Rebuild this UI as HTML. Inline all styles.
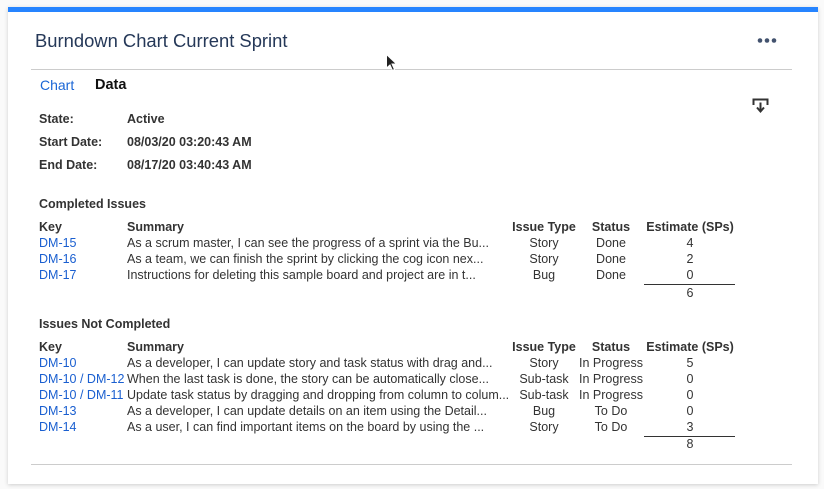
<!DOCTYPE html>
<html><head><meta charset="utf-8"><style>
*{margin:0;padding:0;box-sizing:border-box}
body{width:824px;height:489px;background:#fafafa;position:relative;overflow:hidden;font-family:"Liberation Sans",Arial,sans-serif;color:#333}
.card{position:absolute;left:8px;top:7px;width:810px;height:477px;background:#fff;box-shadow:0 1px 4px rgba(0,0,0,.18)}
.bar{position:absolute;left:8px;top:7px;width:810px;height:5px;background:#2684ff}
.a{position:absolute;white-space:nowrap;font-size:12.5px;line-height:14px}
.b{font-weight:bold}
.l{color:#1a5fd0}
.c{text-align:center}
.hr{position:absolute;height:1px;background:#ccc}
</style></head><body>
<div class="card"></div>
<div class="bar"></div>
<div class="a" style="left:35px;top:30px;font-size:18.4px;line-height:22px;color:#253858">Burndown Chart Current Sprint</div>
<svg style="position:absolute;left:757px;top:37px" width="20" height="7"><circle cx="3" cy="3.5" r="2.3" fill="#42526e"/><circle cx="10" cy="3.5" r="2.3" fill="#42526e"/><circle cx="17" cy="3.5" r="2.3" fill="#42526e"/></svg>
<div class="hr" style="left:31px;top:69px;width:761px"></div>
<svg style="position:absolute;left:385px;top:53px" width="14" height="20"><path d="M1.5 1.5 L1.5 15 L5 12 L7.5 17.5 L9.5 16.5 L7 11 L11.5 11 Z" fill="#222" stroke="#fff" stroke-width="1"/></svg>
<div class="a" style="left:40px;top:77px;font-size:14px;line-height:17px;color:#1a66d6">Chart</div>
<div class="a b" style="left:95px;top:77px;font-size:14.5px;line-height:17px;color:#111">Data</div>
<svg style="position:absolute;left:752px;top:98px" width="17" height="17"><path d="M1.5 7 V1.5 H15.5 V7" fill="none" stroke="#333" stroke-width="2"/><path d="M8.5 4.5 V13" stroke="#333" stroke-width="2"/><path d="M5 9.5 L8.5 13.5 L12 9.5" fill="none" stroke="#333" stroke-width="2"/></svg>

<div class="a b" style="left:39px;top:112px">State:</div><div class="a b" style="left:127px;top:112px">Active</div>
<div class="a b" style="left:39px;top:135px">Start Date:</div><div class="a b" style="left:127px;top:135px">08/03/20 03:20:43 AM</div>
<div class="a b" style="left:39px;top:158px">End Date:</div><div class="a b" style="left:127px;top:158px">08/17/20 03:40:43 AM</div>

<div class="a b" style="left:39px;top:197px">Completed Issues</div>
<div class="a b" style="left:39px;top:220px">Key</div><div class="a b" style="left:127px;top:220px">Summary</div>
<div class="a b c" style="left:504px;width:80px;top:220px">Issue Type</div><div class="a b c" style="left:586px;width:50px;top:220px">Status</div><div class="a b c" style="left:640px;width:100px;top:220px">Estimate (SPs)</div>

<div class="a l" style="left:39px;top:236px">DM-15</div><div class="a" style="left:127px;top:236px">As a scrum master, I can see the progress of a sprint via the Bu...</div><div class="a c" style="left:504px;width:80px;top:236px">Story</div><div class="a c" style="left:576px;width:70px;top:236px">Done</div><div class="a c" style="left:640px;width:100px;top:236px">4</div>
<div class="a l" style="left:39px;top:252px">DM-16</div><div class="a" style="left:127px;top:252px">As a team, we can finish the sprint by clicking the cog icon nex...</div><div class="a c" style="left:504px;width:80px;top:252px">Story</div><div class="a c" style="left:576px;width:70px;top:252px">Done</div><div class="a c" style="left:640px;width:100px;top:252px">2</div>
<div class="a l" style="left:39px;top:268px">DM-17</div><div class="a" style="left:127px;top:268px">Instructions for deleting this sample board and project are in t...</div><div class="a c" style="left:504px;width:80px;top:268px">Bug</div><div class="a c" style="left:576px;width:70px;top:268px">Done</div><div class="a c" style="left:640px;width:100px;top:268px">0</div>
<div class="hr" style="left:644px;top:284px;width:91px;background:#333"></div>
<div class="a c" style="left:640px;width:100px;top:286px">6</div>

<div class="a b" style="left:39px;top:317px">Issues Not Completed</div>
<div class="a b" style="left:39px;top:340px">Key</div><div class="a b" style="left:127px;top:340px">Summary</div>
<div class="a b c" style="left:504px;width:80px;top:340px">Issue Type</div><div class="a b c" style="left:586px;width:50px;top:340px">Status</div><div class="a b c" style="left:640px;width:100px;top:340px">Estimate (SPs)</div>

<div class="a l" style="left:39px;top:356px">DM-10</div><div class="a" style="left:127px;top:356px">As a developer, I can update story and task status with drag and...</div><div class="a c" style="left:504px;width:80px;top:356px">Story</div><div class="a c" style="left:576px;width:70px;top:356px">In Progress</div><div class="a c" style="left:640px;width:100px;top:356px">5</div>
<div class="a l" style="left:39px;top:372px">DM-10 / DM-12</div><div class="a" style="left:127px;top:372px">When the last task is done, the story can be automatically close...</div><div class="a c" style="left:504px;width:80px;top:372px">Sub-task</div><div class="a c" style="left:576px;width:70px;top:372px">In Progress</div><div class="a c" style="left:640px;width:100px;top:372px">0</div>
<div class="a l" style="left:39px;top:388px">DM-10 / DM-11</div><div class="a" style="left:127px;top:388px">Update task status by dragging and dropping from column to colum...</div><div class="a c" style="left:504px;width:80px;top:388px">Sub-task</div><div class="a c" style="left:576px;width:70px;top:388px">In Progress</div><div class="a c" style="left:640px;width:100px;top:388px">0</div>
<div class="a l" style="left:39px;top:404px">DM-13</div><div class="a" style="left:127px;top:404px">As a developer, I can update details on an item using the Detail...</div><div class="a c" style="left:504px;width:80px;top:404px">Bug</div><div class="a c" style="left:576px;width:70px;top:404px">To Do</div><div class="a c" style="left:640px;width:100px;top:404px">0</div>
<div class="a l" style="left:39px;top:420px">DM-14</div><div class="a" style="left:127px;top:420px">As a user, I can find important items on the board by using the ...</div><div class="a c" style="left:504px;width:80px;top:420px">Story</div><div class="a c" style="left:576px;width:70px;top:420px">To Do</div><div class="a c" style="left:640px;width:100px;top:420px">3</div>
<div class="hr" style="left:644px;top:436px;width:91px;background:#333"></div>
<div class="a c" style="left:640px;width:100px;top:437px">8</div>

<div class="hr" style="left:31px;top:464px;width:761px"></div>
</body></html>
